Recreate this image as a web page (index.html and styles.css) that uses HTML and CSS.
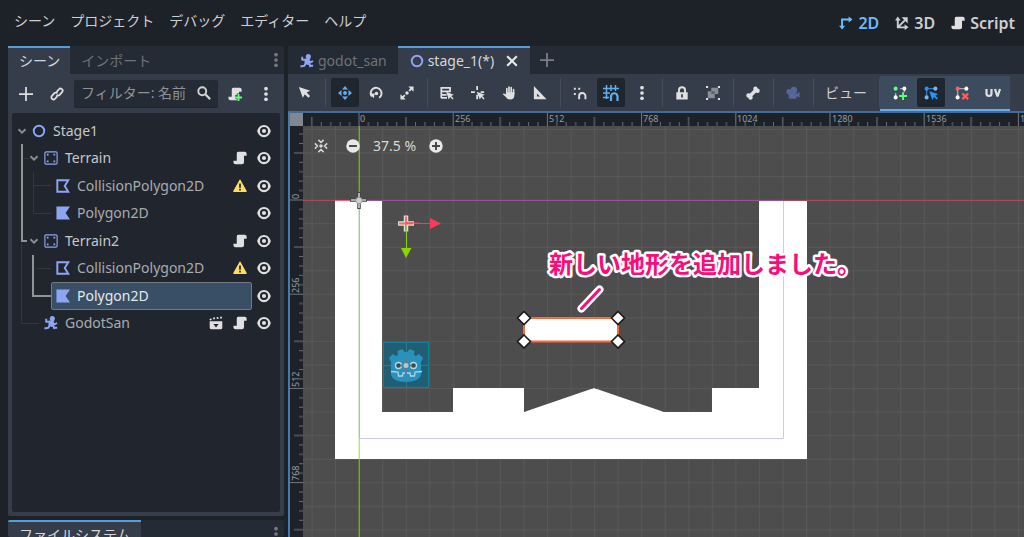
FILE: index.html
```html
<!DOCTYPE html>
<html lang="ja">
<head>
<meta charset="utf-8">
<title>stage_1</title>
<link rel="stylesheet" href="styles.css">
</head>
<body>
<svg class="defs" aria-hidden="true">
  <symbol id="node2d" viewBox="0 0 16 16"><circle cx="8" cy="8" r="6" fill="none" stroke="#8da5f3" stroke-width="2.2"/></symbol>
  <symbol id="static" viewBox="0 0 16 16"><rect x="1" y="1" width="14" height="14" rx="1.5" fill="none" stroke="#8da5f3" stroke-width="1.3"/><path d="M3.2 3.2h2v2h-2zM10.800 3.200h2v2h-2zM3.200 10.800h2v2h-2zM10.800 10.800h2v2h-2z" fill="#8da5f3"/></symbol>
  <symbol id="collision" viewBox="0 0 16 16"><path d="M1.500 1.500h12.500l-4 6.500 4 6.500H1.500z" fill="none" stroke="#8da5f3" stroke-width="2.200"/></symbol>
  <symbol id="polygon" viewBox="0 0 16 16"><path d="M.5.500H16L11 8l5 7.500H.5z" fill="#8da5f3"/></symbol>
  <symbol id="runner" viewBox="0 0 16 16"><circle cx="9.500" cy="3" r="2.900" fill="#8da5f3"/><path d="M2.500 3v3.500l5 0M9 7l3 2.500 3-1.500M8.500 6L7 10l4 2 .8 3M7 10l-2 3.500-4.500.8M11.500 13.500l3.500 0" fill="none" stroke="#8da5f3" stroke-width="2.200" stroke-linejoin="round"/><path d="M5.500 5.500l5.500 0 1 5-3 2-4-2z" fill="#8da5f3"/></symbol>
  <symbol id="script" viewBox="0 0 16 16"><path d="M6.500.8A2 2 0 0 0 4.300 3V11H.5v1.800a2.400 2.400 0 0 0 2.400 2.400h7.300a2.400 2.400 0 0 0 2.400-2.400V5.500h3V3a2.200 2.200 0 0 0-2.200-2.200z" fill="#e0e0e0"/></symbol>
  <symbol id="eye" viewBox="0 0 16 16"><path fill-rule="evenodd" d="M8 1C4 1 1.200 4.200.2 8c1 3.800 3.800 7 7.800 7s6.800-3.200 7.800-7c-1-3.800-3.800-7-7.800-7zm0 2.400a4.600 4.600 0 0 1 0 9.200 4.600 4.600 0 0 1 0-9.200zm0 2.200a2.400 2.400 0 0 0 0 4.800 2.400 2.400 0 0 0 0-4.800z" fill="#e0e0e0"/></symbol>
  <symbol id="warn" viewBox="0 0 16 16"><path d="M8 1.500L15 14H1z" fill="#ffdd65" stroke="#ffdd65" stroke-width="1.500" stroke-linejoin="round"/><path d="M7 5h2v5H7zM7 11h2v2H7z" fill="#21262e"/></symbol>
  <symbol id="clap" viewBox="0 0 16 16"><path fill-rule="evenodd" d="M.8 6h14.400v7.500a1.500 1.500 0 0 1-1.500 1.500H2.300A1.500 1.500 0 0 1 .8 13.500zM5 9l3 4 3-4z" fill="#e0e0e0"/><path d="M.5 3.500l2-1 .8 2-2 .7zM4.500 2l2-.5.6 2-2 .6zM8.500 1.500l2-.5.6 2-2 .5zM12.500 1l2-.3.5 2-2 .4z" fill="#e0e0e0"/></symbol>
  <symbol id="chev" viewBox="0 0 16 16"><path d="M4 6l4 4 4-4" fill="none" stroke="#8a8d93" stroke-width="2.200"/></symbol>
  <symbol id="dots" viewBox="0 0 16 16"><circle cx="8" cy="2" r="2.100"/><circle cx="8" cy="8" r="2.100"/><circle cx="8" cy="14" r="2.100"/></symbol>
  <symbol id="plus" viewBox="0 0 16 16"><path d="M8 0v16M0 8h16" stroke-width="2" stroke="currentColor"/></symbol>
  <symbol id="cursor" viewBox="0 0 16 16"><path d="M1 1l4.500 12.500 2.300-4 4 4 2-2-4-4L14 5.500z" fill="currentColor"/></symbol>
</svg>
<div class="app">
  <header class="menubar">
    <nav class="menus"><button>シーン</button><button>プロジェクト</button><button>デバッグ</button><button>エディター</button><button>ヘルプ</button></nav>
    <nav class="modes">
      <button class="on"><svg class="i" viewBox="0 0 16 16"><path d="M3.500 13V4h9" fill="none" stroke="currentColor" stroke-width="2.200"/><path d="M0 11h7l-3.500 4.500zM11 .5v7L15.500 4z" fill="currentColor"/></svg>2D</button>
      <button><svg class="i" viewBox="0 0 16 16"><path d="M3.200 3v10h10M3.200 13l8-8" fill="none" stroke="currentColor" stroke-width="2.200"/><path d="M0 5h6.500L3.200.5zM11 9.500v6.500l4.500-3.200zM7.500 1.500h7v7z" fill="currentColor"/></svg>3D</button>
      <button><svg class="i"><use href="#script"/></svg>Script</button>
    </nav>
  </header>
  <div class="body">
    <aside class="left">
      <section class="dock">
        <div class="tabs"><button class="tab on">シーン</button><button class="tab">インポート</button><button class="more" aria-label="ドックメニュー"><svg class="i"><use href="#dots"/></svg></button></div>
        <div class="tools">
          <button class="ib" aria-label="追加"><svg class="i"><use href="#plus"/></svg></button>
          <button class="ib" aria-label="リンク"><svg class="i" viewBox="0 0 16 16"><g fill="none" stroke="currentColor" stroke-width="2"><path d="M7.500 5.500l2.700-2.900a2.300 2.300 0 0 1 3.600 3.200L11 9a2.300 2.300 0 0 1-3.500-.2"/><path d="M8.500 10.500l-2.700 2.900a2.300 2.300 0 0 1-3.600-3.200L5 7a2.300 2.300 0 0 1 3.500.2"/></g></svg></button>
          <label class="filter"><input type="text" aria-label="フィルター" placeholder="フィルター: 名前"><svg class="i" viewBox="0 0 16 16"><circle cx="6" cy="6" r="4.500" fill="none" stroke="currentColor" stroke-width="2.200"/><path d="M9.500 9.500l5.500 5.500" stroke="currentColor" stroke-width="2.500"/></svg></label>
          <button class="ib" aria-label="スクリプト追加"><svg class="i" viewBox="0 0 16 16"><use href="#script"/><path d="M12 7.500v8M8 11.500h8" stroke="#363d4a" stroke-width="4"/><path d="M12 8v8M8 12h8" stroke="#5fff78" stroke-width="2.200"/></svg></button>
          <button class="ib last" aria-label="その他"><svg class="i"><use href="#dots"/></svg></button>
        </div>
        <div class="treebox">
          <svg class="lines" aria-hidden="true"><g fill="none" transform="translate(-12 -113)"><path stroke="#33383f" d="M24 158.500h6M33.500 172v41.500H51M33.500 185.500H51M36 268.500h15M21.500 244v79.500H39"/><path stroke="#8f9297" stroke-width="2" d="M22 144v97h5M33 255v41h19"/></g></svg>
          <ul class="tree">
            <li class="row l0"><svg class="i"><use href="#chev"/></svg><span class="item"><svg class="i"><use href="#node2d"/></svg>Stage1</span><svg class="i"><use href="#eye"/></svg></li>
            <li class="row l1"><svg class="i"><use href="#chev"/></svg><span class="item"><svg class="i"><use href="#static"/></svg>Terrain</span><svg class="i"><use href="#script"/></svg><svg class="i"><use href="#eye"/></svg></li>
            <li class="row l2"><span class="item dim"><svg class="i"><use href="#collision"/></svg>CollisionPolygon2D</span><svg class="i"><use href="#warn"/></svg><svg class="i"><use href="#eye"/></svg></li>
            <li class="row l2"><span class="item dim"><svg class="i"><use href="#polygon"/></svg>Polygon2D</span><svg class="i"><use href="#eye"/></svg></li>
            <li class="row l1"><svg class="i"><use href="#chev"/></svg><span class="item"><svg class="i"><use href="#static"/></svg>Terrain2</span><svg class="i"><use href="#script"/></svg><svg class="i"><use href="#eye"/></svg></li>
            <li class="row l2"><span class="item dim"><svg class="i"><use href="#collision"/></svg>CollisionPolygon2D</span><svg class="i"><use href="#warn"/></svg><svg class="i"><use href="#eye"/></svg></li>
            <li class="row l2"><span class="item sel"><svg class="i"><use href="#polygon"/></svg>Polygon2D</span><svg class="i"><use href="#eye"/></svg></li>
            <li class="row l1b"><span class="item dim"><svg class="i"><use href="#runner"/></svg>GodotSan</span><svg class="i"><use href="#clap"/></svg><svg class="i"><use href="#script"/></svg><svg class="i"><use href="#eye"/></svg></li>
          </ul>
        </div>
      </section>
      <section class="dock files">
        <div class="tabs"><button class="tab on">ファイルシステム</button><button class="more" aria-label="ドックメニュー"><svg class="i"><use href="#dots"/></svg></button></div>
      </section>
    </aside>
    <main class="main">
      <div class="tabs">
        <button class="tab scene"><svg class="i"><use href="#runner"/></svg>godot_san</button>
        <button class="tab scene on"><svg class="i"><use href="#node2d"/></svg>stage_1(*)<svg class="i close" viewBox="0 0 16 16"><path d="M2.500 2.500l11 11M13.500 2.500l-11 11" stroke="#e8e8e8" stroke-width="2.400"/></svg></button>
        <button class="newtab" aria-label="新規シーン"><svg class="i"><use href="#plus"/></svg></button>
      </div>
      <div class="toolbar">
        <button class="ib" aria-label="選択"><svg class="i"><use href="#cursor"/></svg></button>
        <i class="sep"></i>
        <button class="ib on" aria-label="移動"><svg class="i" viewBox="0 0 16 16"><circle cx="8" cy="8" r="2.200" fill="currentColor"/><path d="M8 0l3.500 4h-7zM8 16l3.500-4h-7zM0 8l4-3.500v7zM16 8l-4-3.500v7z" fill="currentColor"/></svg></button>
        <button class="ib" aria-label="回転"><svg class="i" viewBox="0 0 16 16"><path d="M3.200 12A6.200 6.200 0 1 1 11.500 13.500" fill="none" stroke="currentColor" stroke-width="2.200"/><circle cx="8.500" cy="8.500" r="2" fill="currentColor"/><path d="M.5 8.500h6L5.500 14z" fill="currentColor"/></svg></button>
        <button class="ib" aria-label="拡大縮小"><svg class="i" viewBox="0 0 16 16"><circle cx="8" cy="8" r="2" fill="currentColor"/><path d="M9.500.5h6v6zM.5 9.500v6h6z" fill="currentColor"/><path d="M10.500 5.500l3-3M5.500 10.500l-3 3" stroke="currentColor" stroke-width="2.200"/></svg></button>
        <i class="sep"></i>
        <button class="ib" aria-label="一覧選択"><svg class="i" viewBox="0 0 16 16"><path d="M1.500 14V2h10v5M1.500 6h10M1.500 10h6M1.500 13.500H8" fill="none" stroke="currentColor" stroke-width="2"/><path d="M7 6.500l3 9 1.700-3 2.500 3 1.300-1.300-2.700-2.700 3-1.500z" fill="currentColor"/></svg></button>
        <button class="ib" aria-label="ピボット"><svg class="i" viewBox="0 0 16 16"><path d="M7 0v4.500M7 10v5M0 7h4.500M11 7h4" stroke="currentColor" stroke-width="2"/><path d="M6.500 6.500l3.500 9 1.700-3 2.500 3 1.300-1.300-2.700-2.700 3-1.500z" fill="currentColor"/></svg></button>
        <button class="ib" aria-label="パン"><svg class="i" viewBox="0 0 16 16"><path d="M5.500 9V3M8 8V1.200M10.500 8V1.800M13.200 9V4" stroke="currentColor" stroke-width="1.900" stroke-linecap="round"/><path d="M4.500 7h9.700v3.500c0 3-2 5-4.700 5-3 0-4-1.500-5-3L.8 9.500c.5-1.200 2-1.200 3.700.3z" fill="currentColor"/></svg></button>
        <button class="ib" aria-label="定規"><svg class="i" viewBox="0 0 16 16"><path fill-rule="evenodd" d="M1 0l14.500 15H1zM4.500 8.500V12H8z" fill="currentColor"/></svg></button>
        <i class="sep"></i>
        <button class="ib" aria-label="スマートスナップ"><svg class="i" viewBox="0 0 16 16"><path d="M1 2h2.200v2.200H1zM6 2h2.200v2.200H6zM1 8h2.200v2.200H1z" fill="currentColor"/><path d="M7 15v-3.500a3.600 3.600 0 0 1 7.200 0V15" fill="none" stroke="currentColor" stroke-width="2.200"/></svg></button>
        <button class="ib on" aria-label="グリッドスナップ"><svg class="i big" viewBox="0 0 16 16"><path d="M3.500 0v14M8 0v6M12.500 0v6M0 3.500h16M0 8h7M0 12.500h6" stroke="currentColor" stroke-width="1.500"/><path d="M8 16v-4.500a3.200 3.200 0 0 1 6.500 0V16" fill="none" stroke="currentColor" stroke-width="2.200"/></svg></button>
        <button class="ib" aria-label="スナップ設定"><svg class="i"><use href="#dots"/></svg></button>
        <i class="sep"></i>
        <button class="ib" aria-label="ロック"><svg class="i" viewBox="0 0 16 16"><path d="M4.500 8V5a3.500 3.500 0 0 1 7 0v3" fill="none" stroke="currentColor" stroke-width="2.200"/><path fill-rule="evenodd" d="M1.500 7h13v8.500h-13zM7 9.500v3.500h2V9.500z" fill="currentColor"/></svg></button>
        <button class="ib" aria-label="グループ"><svg class="i" viewBox="0 0 16 16"><path d="M6 2h8v7h-4v5H2V6h4z" fill="#8a8e95"/><path d="M6 6h4v3H6z" fill="#5c626c"/><path d="M0 0h2.400v2.400H0zM13.600 0H16v2.400h-2.400zM0 13.600h2.400V16H0zM13.600 13.600H16V16h-2.400z" fill="currentColor"/></svg></button>
        <i class="sep"></i>
        <button class="ib" aria-label="ボーン"><svg class="i" viewBox="0 0 16 16"><path d="M4.500 11.500l7-7" stroke="currentColor" stroke-width="4"/><g fill="currentColor"><circle cx="10.800" cy="3" r="2.500"/><circle cx="13.200" cy="5.400" r="2.500"/><circle cx="2.800" cy="10.800" r="2.500"/><circle cx="5.200" cy="13.200" r="2.500"/></g></svg></button>
        <i class="sep"></i>
        <button class="ib cam" aria-label="カメラ" disabled><svg class="i" viewBox="0 0 16 16"><circle cx="3.500" cy="6.500" r="3"/><circle cx="9" cy="4.500" r="3.700"/><path d="M2.500 7h9.500v2L15.500 6.500v7L12 11.500v3H3.500z"/></svg></button>
        <i class="sep"></i>
        <button class="view">ビュー</button>
        <i class="sep"></i>
        <div class="poly">
          <button class="ib" aria-label="ポリゴン作成"><svg class="i" viewBox="0 0 16 16"><path d="M8 3h4M3 8v4M13 4v3" stroke="#a0a7b0" stroke-width="1.600"/><circle cx="3" cy="3" r="2.300" fill="#5fff78"/><circle cx="13" cy="3" r="2.300" fill="#fff"/><circle cx="3" cy="13" r="2.300" fill="#fff"/><path d="M11.500 7v9M7 11.500h9" stroke="#5fff78" stroke-width="2.200"/></svg></button>
          <button class="ib on" aria-label="ポリゴン編集"><svg class="i" viewBox="0 0 16 16"><path d="M3 3h10M3 3v10" stroke="#3c73b0" stroke-width="1.600"/><circle cx="3" cy="3" r="2.300" fill="#2b93f5"/><circle cx="13" cy="3" r="2.300" fill="#70bafa"/><circle cx="3" cy="13" r="2.300" fill="#70bafa"/><path d="M6 6l3.500 10 2-3.500 3 3 1.500-1.500-3-3L16 9z" fill="#2b93f5"/></svg></button>
          <button class="ib" aria-label="点を削除"><svg class="i" viewBox="0 0 16 16"><path d="M3 3h10M3 3v10" stroke="#a0a7b0" stroke-width="1.600"/><circle cx="3" cy="3" r="2.300" fill="#ff5f5f"/><circle cx="13" cy="3" r="2.300" fill="#fff"/><circle cx="3" cy="13" r="2.300" fill="#fff"/><path d="M8.500 8.500l6.500 6.500M15 8.500L8.500 15" stroke="#ff5f5f" stroke-width="2.600"/></svg></button>
          <button class="ib" aria-label="UV"><svg class="i uv" viewBox="0 0 18 16"><path d="M2.500 4v4.500a2.500 2.500 0 0 0 5 0V4M11 4l2.300 7h.4L16 4" fill="none" stroke="currentColor" stroke-width="2.200" stroke-linejoin="bevel"/></svg></button>
        </div>
      </div>
      <div class="viewport">
        <div class="corner"></div>
        <svg class="hruler">
          <defs><pattern id="ht" x="55.500" width="94.200" height="14" patternUnits="userSpaceOnUse"><path d="M.5 0v14" stroke="#73777d"/><path d="M47.500 5v9" stroke="#73777d"/><path d="M9.900 10v4M19.300 10v4M28.800 10v4M38.200 10v4M57 10v4M66.400 10v4M75.900 10v4M85.300 10v4" stroke="#686c72"/></pattern></defs>
          <rect width="100%" height="14" fill="url(#ht)"/>
          <g class="rl"><text x="57" y="10">0</text><text x="152" y="10">256</text><text x="246" y="10">512</text><text x="340" y="10">768</text><text x="434" y="10">1024</text><text x="529" y="10">1280</text><text x="623" y="10">1536</text><text x="717" y="10">1792</text></g>
        </svg>
        <svg class="vruler">
          <defs><pattern id="vt" y="73.500" width="15" height="94.200" patternUnits="userSpaceOnUse"><path d="M2 .5h13M6 47.500h9" stroke="#73777d"/><path d="M11 9.900h4M11 19.300h4M11 28.800h4M11 38.200h4M11 57h4M11 66.400h4M11 75.900h4M11 85.300h4" stroke="#686c72"/></pattern></defs>
          <rect width="15" height="100%" fill="url(#vt)"/>
          <g class="rl"><text transform="translate(11 73) rotate(-90)">0</text><text transform="translate(11 167) rotate(-90)">256</text><text transform="translate(11 261) rotate(-90)">512</text><text transform="translate(11 355) rotate(-90)">768</text></g>
        </svg>
        <div class="stage">
          <svg class="canvas">
            <defs><pattern id="grid" x="8.500" y="3" width="23.550" height="23.550" patternUnits="userSpaceOnUse"><path d="M.5 0v23.550M0 .5h23.550" fill="none" stroke="#585858"/></pattern></defs>
            <g transform="translate(-303 -126)">
              <path d="M335 200h47v212h71v-24h71v24l70-24 70 24h48v-24h47V200h48v259H335z" fill="#fff"/>
            </g>
            <path d="M0 0h2000v74H0zM0 74h32v259H0zM79 74h377v188h-47v24h-48l-70-24-70 24v-24h-71v24H79zM504 74h1500v259H504zM0 333h2000v1200H0z" fill="url(#grid)"/>
            <g transform="translate(-303 -126)">
              <path d="M303 200.500h56M783 200.500h1300" stroke="#a84a5d"/>
              <path d="M335 200.500h24" stroke="#f06078"/>
              <path d="M359 200.500h424" stroke="#9b5197"/>
              <path d="M359 438.500h424.500V201" fill="none" stroke="#c9c9fa"/>
              <g stroke-width="1.400"><path d="M359.300 126v74M359.300 459v1300" stroke="#76ac14"/><path d="M359.300 200v238" stroke="#a3c8a6"/><path d="M359.300 438v21" stroke="#b4ea62"/></g>
              <path d="M359 192v17M350 200h17" stroke="#444" stroke-width="3.500"/><path d="M359 193v15M351 200h15" stroke="#ccc" stroke-width="1.600"/><circle cx="359" cy="200.500" r="3.200" fill="#d0d0d0" stroke="#888" stroke-width=".7"/>
              <rect x="383.500" y="342.500" width="45" height="45" fill="#205e73" stroke="#128199"/>
              <path d="M406.500 343v44M384 365.500h44" stroke="#3a7689"/>
              <path d="M391 362l-2-4 4-4 3 2 2-1-.5-4 5-2 2 3h3l2-3 5 2-.5 4 2 1 3-2 4 4-2 4v12c0 5-7 8-15 8s-15-3-15-8z" fill="#2a91bd"/>
              <path d="M391 371.500l7 .5.5 4h4l.5-3h7l.5 3h4l.5-4 7-.5" fill="none" stroke="#a9d9e6" stroke-width="1.300"/>
              <circle cx="398.500" cy="365.500" r="3" fill="#374b52" stroke="#b5dce0" stroke-width="1.300"/><circle cx="413.500" cy="365.500" r="3" fill="#374b52" stroke="#b5dce0" stroke-width="1.300"/>
              <path d="M406 358v16M400 365.500h12" stroke="#64798a" stroke-width="2"/><circle cx="406" cy="365.500" r="2.500" fill="#b6c5d1"/>
              <path d="M406.500 224v25" stroke="#8bd400"/><path d="M401 248h10.500L406 258z" fill="#8bd400"/>
              <path d="M406 223.500h25" stroke="#f73b58"/><path d="M430 218v11l11-5.500z" fill="#f73b58"/>
              <path d="M406 215.500v16M398 223.500h16" stroke="#ddd" stroke-width="4.500"/><path d="M406 216.500v14M399 223.500h14" stroke="#f06f66" stroke-width="2"/><path d="M406 223h14" stroke="#f73b58"/><path d="M406.500 225v10" stroke="#9ac94a"/>
              <path d="M524 318h94v23.500h-94z" fill="#fff" stroke="#fa6a3f" stroke-width="2"/>
              <g fill="#fff" stroke="#1b1b1b" stroke-width="1.600"><path id="dm" d="M524 311.500l6.500 6.500-6.500 6.500-6.500-6.500z"/><use href="#dm" x="94"/><use href="#dm" y="23.500"/><use href="#dm" x="94" y="23.500"/></g>
              <path d="M581.500 308.500l18-19" stroke="#fff" stroke-width="8" stroke-linecap="round"/><path d="M581.500 308.500l18-19" stroke="#fb0c7a" stroke-width="3" stroke-linecap="round"/>
              <text class="note" x="549" y="273">新しい地形を追加しました。</text>
            </g>
          </svg>
          <div class="zoom">
            <button aria-label="中央に表示"><svg class="i" viewBox="0 0 16 16"><circle cx="8" cy="8" r="2" fill="currentColor"/><path d="M5 1l3 3 3-3M5 15l3-3 3 3M1 5l3 3-3 3M15 5l-3 3 3 3" fill="none" stroke="currentColor" stroke-width="1.700"/></svg></button>
            <button aria-label="縮小"><svg class="i" viewBox="0 0 16 16"><circle cx="8" cy="8" r="7.700" fill="#e8e8e8"/><path d="M3.500 8h9" stroke="#444" stroke-width="2.200"/></svg></button>
            <button class="pct">37.5 %</button>
            <button aria-label="拡大"><svg class="i" viewBox="0 0 16 16"><circle cx="8" cy="8" r="7.700" fill="#e8e8e8"/><path d="M3.500 8h9M8 3.500v9" stroke="#444" stroke-width="2.200"/></svg></button>
          </div>
        </div>
      </div>
    </main>
  </div>
</div>
</body>
</html>
```
FILE: styles.css
```css
* { box-sizing: border-box; }
body { margin: 0; background: #1d2229; color: #cdcfd2; font: 14px/20px "Noto Sans", "Noto Sans CJK JP", sans-serif; }
button { display: flex; align-items: center; border: 0; margin: 0; padding: 0; background: none; color: inherit; font: inherit; white-space: nowrap; }
.defs { position: absolute; width: 0; height: 0; }
.i { width: 14px; height: 14px; flex: none; display: block; fill: currentColor; }
.i.big { width: 16px; height: 16px; }
.i.uv { width: 18px; height: 16px; }
.app { display: flex; flex-direction: column; height: 100vh; overflow: hidden; }
.menubar { display: flex; justify-content: space-between; flex: 0 0 46px; padding: 0 9px 0 14px; }
.menus { display: flex; gap: 15px; height: 41px; }
.modes { display: flex; gap: 16px; height: 45px; font-size: 16px; font-weight: 600; }
.modes button { gap: 5px; }
.modes .on { color: #70bafa; }
.body { display: flex; flex: 1; min-height: 0; }
.left { display: flex; flex-direction: column; gap: 4px; width: 288px; padding: 0 4px 0 8px; flex: none; }
.dock { display: flex; flex-direction: column; flex: 1; background: #363d4a; min-height: 0; padding: 0 4px 4px; border-radius: 2px; }
.files { flex: 0 0 17px; overflow: hidden; padding-bottom: 0; }
.tabs { display: flex; flex: 0 0 28px; background: #252b34; }
.dock .tabs { margin: 0 -4px; }
.tab { padding: 0 10px 0 11px; border-top: 2px solid transparent; color: #6d7279; }
.tab.on { background: #363d4a; border-top-color: #569eda; color: #d5d7da; }
.more { margin-left: auto; padding-right: 1px; color: #757a81; }
.tools { display: flex; align-items: center; height: 39px; gap: 3px; color: #e0e0e0; }
.ib { width: 28px; height: 29px; justify-content: center; border-radius: 2px; flex: none; color: #e0e0e0; }
.ib.on { background: #20262e; color: #62aff0; }
.filter { display: flex; align-items: center; flex: 1; height: 28px; padding: 0 7px; background: #252b34; border-bottom: 1px solid #20252d; border-radius: 2px; }
.filter input { flex: 1; min-width: 0; width: 0; padding: 0; border: 0; outline: 0; background: none; color: #cdcfd2; font: inherit; }
.filter input::placeholder { color: #8e9196; opacity: 1; }
.filter .i { color: #d0d1d3; }
.treebox { position: relative; flex: 1; background: #21262e; border-radius: 2px; }
.lines { position: absolute; left: 0; top: 0; width: 100%; height: 100%; }
.tree { position: relative; display: grid; grid-template-rows: repeat(8, 1fr); height: 220px; list-style: none; margin: 4px 0 0; padding: 0; }
.row { display: flex; align-items: center; gap: 10px; padding: 0 9px 0 3px; }
.l1 { padding-left: 15px; }
.l2 { padding-left: 39px; }
.l1b { padding-left: 27px; }
.item { display: flex; align-items: center; flex: 1; align-self: stretch; gap: 7px; padding: 0 4px; border: 1px solid transparent; border-radius: 2px; color: #c6c8cb; }
.row > .i + .item { margin-left: -12px; }
.item + .i { margin-left: -5px; }
.dim { color: #a9abae; }
.sel { background: #394f66; border-color: #73797f; color: #e6e8ea; }
.main { display: flex; flex-direction: column; flex: 1; min-width: 0; }
.scene { gap: 4px; padding: 0 11px 0 12px; }
.close { margin-left: 7px; }
.newtab { padding: 0 10px; color: #7b8087; }
.toolbar { display: flex; align-items: center; gap: 3px; flex: 0 0 37px; padding: 0 0 0 3px; background: #363d4a; }
.sep { width: 1px; height: 29px; margin: 0 2px 0 3px; background: #464d59; flex: none; }
.cam .i { fill: #56659a; }
.view { padding: 0 6px; color: #cdcfd2; }
.poly { display: flex; align-items: center; gap: 3px; align-self: stretch; margin: 2px 0 0 -5px; padding: 0 3px 0 6px; background: #3c4c5e; border-bottom: 2px solid #62aff0; }
.viewport { position: relative; display: grid; grid-template: 15px 1fr / 15px 1fr; flex: 1; min-height: 0; }
.viewport::after { content: ""; position: absolute; inset: 0; border-left: 2px solid #477aa8; border-top: 2px solid #416d96; pointer-events: none; }
.corner { background: #7f8791; }
.hruler { width: 100%; height: 14px; align-self: end; }
.vruler { width: 15px; height: 100%; }
.rl { fill: #989ba0; font-size: 9px; }
.stage { position: relative; background: #4d4d4d; overflow: hidden; }
.canvas { display: block; width: 100%; height: 100%; }
.note { font: bold 24px "Noto Sans CJK JP", sans-serif; fill: #fb0c7a; stroke: #fff; stroke-width: 5px; stroke-linejoin: round; paint-order: stroke; }
.zoom { position: absolute; left: 11px; top: 10px; display: flex; color: #d8d8d8; }
.zoom button + button { margin-left: 18px; }
.zoom button + .pct { margin-left: 13px; }
.zoom .pct + button { margin-left: 13px; }
```
